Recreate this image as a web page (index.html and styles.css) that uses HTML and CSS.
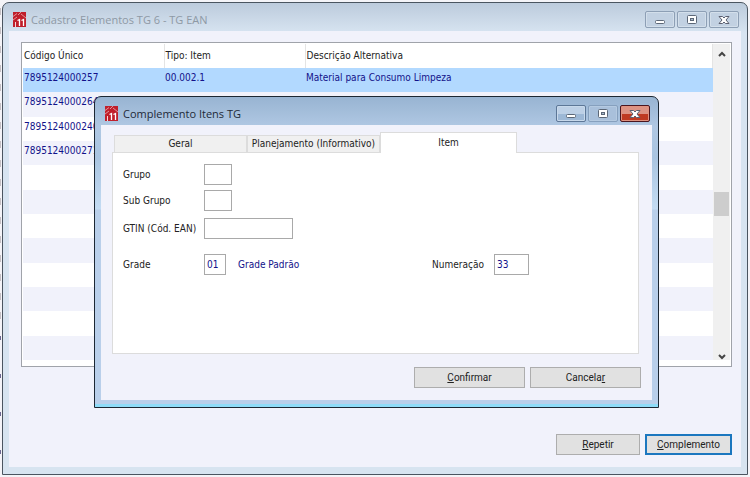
FILE: index.html
```html
<!DOCTYPE html>
<html lang="pt-BR">
<head>
  <meta charset="UTF-8" />
  <meta name="viewport" content="width=device-width, initial-scale=1" />
  <title>Cadastro Elementos TG 6 - TG EAN</title>
  <link rel="stylesheet" href="styles.css">
</head>
<body>
  <!-- Símbolos reutilizados nas duas janelas -->
  <svg class="symbols" aria-hidden="true">
    <symbol id="logo" viewBox="0 0 13 15">
      <path d="M0 0h13v15H0z" fill="#c01f2b"/>
      <path d="M0 4.500l4-3M5 3l3-3M8 2l5 4M0 8l4-3" fill="none" stroke="#e9b3b6" stroke-width=".8"/>
      <path d="M2.500 10v5" fill="none" stroke="#f3d6d8" stroke-width="1"/>
      <path d="M4.500 8.500L6.500 7.500V14M8.500 8.500l2-1V14" fill="none" stroke="#fff" stroke-width="1.300"/>
    </symbol>
    <symbol id="min" viewBox="0 0 12 10">
      <rect x="1.500" y="5.500" width="9" height="3" rx="1" fill="#fff" stroke="#5c6777"/>
    </symbol>
    <symbol id="max" viewBox="0 0 12 10">
      <rect x="1.500" y="0.500" width="9" height="8" rx="1" fill="#fff" stroke="#5c6777"/>
      <rect x="4.500" y="3.500" width="3" height="2" fill="#a9bacd" stroke="#5c6777"/>
    </symbol>
    <symbol id="close" viewBox="0 0 12 10">
      <path d="M1 1.500h3.500L6 3l1.500-1.500H11L8 5l3 3.500H7.500L6 7 4.500 8.500H1L4 5z" fill="#fff" stroke="#5c6070"/>
    </symbol>
  </svg>

  <main class="window">
    <header class="titlebar">
      <svg class="logo"><use href="#logo"/></svg>
      <h1>Cadastro Elementos TG 6 - TG EAN</h1>
      <div class="controls">
        <button type="button" aria-label="Minimizar"><svg><use href="#min"/></svg></button>
        <button type="button" aria-label="Maximizar"><svg><use href="#max"/></svg></button>
        <button type="button" aria-label="Fechar"><svg><use href="#close"/></svg></button>
      </div>
    </header>
    <div class="client">
      <div class="list">
        <table>
          <thead>
            <tr><th>Código Único</th><th>Tipo: Item</th><th>Descrição Alternativa</th></tr>
          </thead>
          <tbody>
            <tr class="selected"><td>7895124000257</td><td>00.002.1</td><td>Material para Consumo Limpeza</td></tr>
            <tr><td>7895124000264</td><td></td><td></td></tr>
            <tr><td>7895124000240</td><td></td><td></td></tr>
            <tr><td>7895124000271</td><td></td><td></td></tr>
            <tr><td></td><td></td><td></td></tr>
            <tr><td></td><td></td><td></td></tr>
            <tr><td></td><td></td><td></td></tr>
            <tr><td></td><td></td><td></td></tr>
            <tr><td></td><td></td><td></td></tr>
            <tr><td></td><td></td><td></td></tr>
            <tr><td></td><td></td><td></td></tr>
            <tr><td></td><td></td><td></td></tr>
          </tbody>
        </table>
        <div class="scrollbar">
          <svg viewBox="0 0 8 6"><path d="M1 5l3-3 3 3"/></svg>
          <div class="thumb"></div>
          <svg viewBox="0 0 8 6"><path d="M1 1l3 3 3-3"/></svg>
        </div>
      </div>
      <div class="actions">
        <button type="button" class="btn"><u>R</u>epetir</button>
        <button type="button" class="btn default"><u>C</u>omplemento</button>
      </div>
    </div>
  </main>

  <section class="window dialog" role="dialog" aria-labelledby="dialog-title">
    <header class="titlebar">
      <svg class="logo"><use href="#logo"/></svg>
      <h2 id="dialog-title">Complemento Itens TG</h2>
      <div class="controls">
        <button type="button" aria-label="Minimizar"><svg><use href="#min"/></svg></button>
        <button type="button" class="disabled" aria-label="Maximizar"><svg><use href="#max"/></svg></button>
        <button type="button" class="close" aria-label="Fechar"><svg><use href="#close"/></svg></button>
      </div>
    </header>
    <div class="client">
      <div class="tabs" role="tablist">
        <button type="button" role="tab">Geral</button>
        <button type="button" role="tab">Planejamento (Informativo)</button>
        <button type="button" role="tab" class="active" aria-selected="true">Item</button>
      </div>
      <form class="panel">
        <div class="field">
          <label for="grupo">Grupo</label>
          <input id="grupo" class="w-small" type="text">
        </div>
        <div class="field">
          <label for="subgrupo">Sub Grupo</label>
          <input id="subgrupo" class="w-small" type="text">
        </div>
        <div class="field">
          <label for="gtin">GTIN (Cód. EAN)</label>
          <input id="gtin" class="w-large" type="text">
        </div>
        <div class="field">
          <label for="grade">Grade</label>
          <input id="grade" class="w-tiny" type="text" value="01">
          <output for="grade">Grade Padrão</output>
          <label for="numeracao">Numeração</label>
          <input id="numeracao" class="w-medium" type="text" value="33">
        </div>
      </form>
      <div class="actions">
        <button type="button" class="btn"><u>C</u>onfirmar</button>
        <button type="button" class="btn">Cancela<u>r</u></button>
      </div>
    </div>
  </section>
</body>
</html>
```

FILE: styles.css
```css
* {
  box-sizing: border-box;
}
body {
  margin: 0;
  padding: 2px;
  height: 100vh;
  background: #f4f4f8;
  font-family: 'DejaVu Sans Condensed', 'DejaVu Sans', sans-serif;
  font-stretch: condensed;
  font-size: 10px;
  line-height: 14px;
  color: #222;
  position: relative;
  overflow: hidden;
}
/* Restos da tela de trás na borda esquerda */
body::before {
  content: '';
  position: absolute;
  top: 8px;
  left: 0;
  width: 1px;
  height: 320px;
  background: repeating-linear-gradient(#c4c0c4 0 7px, transparent 7px 19px);
}
body::after {
  content: '';
  position: absolute;
  top: 336px;
  left: 0;
  width: 1px;
  bottom: 8px;
  background: repeating-linear-gradient(#6b6890 0 4px, transparent 4px 38px);
}
.symbols {
  position: absolute;
  width: 0;
  height: 0;
}

/* Janelas */
.window {
  height: 100%;
  display: flex;
  flex-direction: column;
  padding: 0 6px 7px;
  border: 1px solid #4a5560;
  border-radius: 7px 7px 0 0;
  background: linear-gradient(#bccbdc, #d7e4f1 30px, #d7e4f0);
}
.titlebar {
  display: flex;
  align-items: center;
  height: 28px;
  padding: 5px 2px 0 4px;
}
.titlebar h1,
.titlebar h2 {
  flex: 1;
  margin: 0;
  font: 11px/16px 'Open Sans', sans-serif;
  color: #8e99a5;
}
.logo {
  width: 13px;
  height: 15px;
  margin-right: 5px;
}
.controls {
  display: flex;
  gap: 2px;
}
.controls button {
  display: flex;
  align-items: center;
  justify-content: center;
  width: 30px;
  height: 17px;
  padding: 0;
  border: 1px solid #8d9fb5;
  border-radius: 2px;
  background: #c2d1e2;
  box-shadow: inset 0 0 0 1px #d3dfeb;
}
.controls svg {
  width: 12px;
  height: 10px;
}
.client {
  flex: 1;
  display: flex;
  flex-direction: column;
  min-height: 0;
  padding: 11px 9px 12px 12px;
  background: #f1f2fb;
}

/* Lista */
.list {
  flex: 1;
  display: flex;
  min-height: 0;
  padding: 1px 1px 6px;
  border: 1px solid #a0a3aa;
  background: #fff;
}
table {
  flex: 1;
  height: 100%;
  border-collapse: collapse;
  table-layout: fixed;
}
th,
td {
  height: 24px;
  padding: 0 1px;
  text-align: left;
  font-weight: normal;
}
th {
  border-right: 1px solid #e4e4e4;
}
th:nth-child(-n+2) {
  width: 141px;
}
td {
  padding-bottom: 4px;
  color: #12128a;
}
tbody tr:nth-child(even) {
  background: #f1f2fb;
}
tbody .selected {
  background: #b2d9ff;
}
.scrollbar {
  display: flex;
  flex-direction: column;
  align-items: center;
  width: 17px;
  padding-top: 7px;
  background: #f0f0f0;
}
.scrollbar svg {
  width: 8px;
  height: 6px;
  fill: none;
  stroke: #444;
  stroke-width: 2;
}
.thumb {
  width: 15px;
  height: 24px;
  margin: 135px 0 auto;
  background: #cdcdcd;
}

/* Botões */
.actions {
  display: flex;
  justify-content: flex-end;
  gap: 5px;
}
.btn {
  width: 111px;
  height: 21px;
  padding: 0;
  border: 1px solid #adadad;
  background: #e1e1e1;
  font: 10px/14px Roboto, sans-serif;
  color: #222;
}
.window > .client > .actions {
  margin-top: 67px;
}
.window .list + .actions .btn {
  width: 84px;
}
.window .list + .actions .default {
  width: 87px;
  border: 2px solid #1b77bf;
}

/* Diálogo */
.dialog {
  position: absolute;
  top: 96px;
  left: 94px;
  right: 91px;
  height: auto;
  border: 1px solid #1c2733;
  background: linear-gradient(#98b4d2, #b0c8e3 30px, #a9c4e0 60px, #c4dcf3 112px, #b9cfea 113px);
  box-shadow: inset 0 -3px #8fdcf8;
}
.dialog .titlebar h2 {
  color: #1e2a38;
}
.dialog .controls button {
  border-color: #5d7797;
  background: linear-gradient(#bdd0e6 50%, #9db8d6 50%);
  box-shadow: inset 0 0 0 1px #c8d9eb;
}
.dialog .controls .disabled {
  border-color: #86a0be;
  background: #a9c0db;
  box-shadow: inset 0 0 0 1px #b5cae1;
}
.dialog .controls .close {
  border-color: #4a1620;
  background: linear-gradient(#dd9384 50%, #bf3a22 50%);
  box-shadow: inset 0 0 0 1px #e0917f;
}
.dialog .client {
  padding: 7px 11px 12px;
}
.tabs {
  display: flex;
  align-items: flex-end;
  padding-left: 2px;
}
.tabs button {
  width: 133px;
  height: 17px;
  padding: 0;
  border: 1px solid #dcdcdc;
  border-bottom: 0;
  background: #f0f0f0;
  font: inherit;
  color: #222;
  white-space: nowrap;
}
.tabs .active {
  width: 137px;
  height: 21px;
  margin-bottom: -1px;
  background: #fff;
  z-index: 1;
}
.panel {
  min-height: 202px;
  margin-right: 2px;
  padding: 11px 10px;
  border: 1px solid #dcdcdc;
  background: #fff;
}
.field {
  display: flex;
  align-items: center;
  margin-bottom: 5px;
}
.field label:first-child {
  width: 81px;
}
.field input {
  height: 21px;
  padding: 0 2px;
  border: 1px solid #a9a9a9;
  background: #fff;
  font: inherit;
  color: #12128a;
}
.field:nth-child(3) {
  margin: 7px 0 15px;
}
.field output {
  width: 194px;
  margin-left: 12px;
  color: #12128a;
}
.field output + label {
  width: 62px;
}
.w-tiny { width: 22px; }
.w-small { width: 28px; }
.w-medium { width: 35px; }
.w-large { width: 89px; }
.dialog > .client > .actions {
  margin-top: 13px;
}
```
